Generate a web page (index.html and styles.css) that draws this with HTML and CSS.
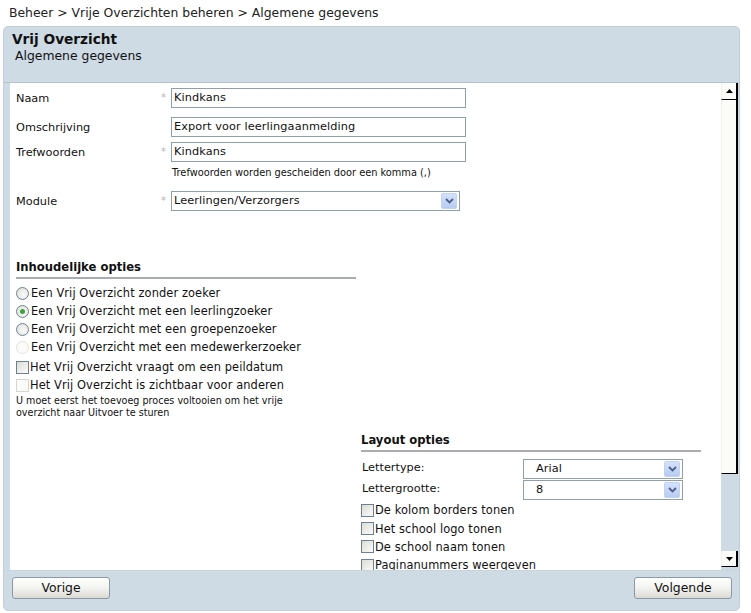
FILE: index.html
```html
<!DOCTYPE html>
<html>
<head>
<meta charset="utf-8">
<link rel="stylesheet" href="styles.css">
</head>
<body>
<div class="crumb">Beheer &gt; Vrije Overzichten beheren &gt; Algemene gegevens</div>
<div class="panel">
  <div class="panel-head">
    <div class="title">Vrij Overzicht</div>
    <div class="subtitle">Algemene gegevens</div>
  </div>
  <div class="content">
    <div class="scroll-body">
      <div class="row r-naam">
        <div class="label">Naam</div><div class="star">*</div>
        <div class="input">Kindkans</div>
      </div>
      <div class="row r-omschr">
        <div class="label">Omschrijving</div><div class="star"></div>
        <div class="input">Export voor leerlingaanmelding</div>
      </div>
      <div class="row r-tref">
        <div class="label">Trefwoorden</div><div class="star">*</div>
        <div class="input">Kindkans</div>
      </div>
      <div class="hint">Trefwoorden worden gescheiden door een komma (,)</div>
      <div class="row r-module">
        <div class="label">Module</div><div class="star">*</div>
        <div class="select wide"><span class="val">Leerlingen/Verzorgers</span><span class="arrow"><svg width="9" height="6" viewBox="0 0 9 6"><path d="M1 1 L4.5 4.5 L8 1" fill="none" stroke="#4b5f8a" stroke-width="1.8"/></svg></span></div>
      </div>

      <div class="section left-sec">
        <div class="sec-title">Inhoudelijke opties</div>
        <div class="opt"><span class="radio"></span>Een Vrij Overzicht zonder zoeker</div>
        <div class="opt"><span class="radio checked"></span>Een Vrij Overzicht met een leerlingzoeker</div>
        <div class="opt"><span class="radio"></span>Een Vrij Overzicht met een groepenzoeker</div>
        <div class="opt"><span class="radio disabled"></span>Een Vrij Overzicht met een medewerkerzoeker</div>
        <div class="opt cb first-cb"><span class="check"></span>Het Vrij Overzicht vraagt om een peildatum</div>
        <div class="opt cb"><span class="check disabled"></span>Het Vrij Overzicht is zichtbaar voor anderen</div>
        <div class="note">U moet eerst het toevoeg proces voltooien om het vrije<br>overzicht naar Uitvoer te sturen</div>
      </div>

      <div class="section right-sec">
        <div class="sec-title">Layout opties</div>
        <div class="lrow first-lrow">
          <div class="llabel">Lettertype:</div>
          <div class="select small"><span class="val">Arial</span><span class="arrow"><svg width="9" height="6" viewBox="0 0 9 6"><path d="M1 1 L4.5 4.5 L8 1" fill="none" stroke="#4b5f8a" stroke-width="1.8"/></svg></span></div>
        </div>
        <div class="lrow">
          <div class="llabel">Lettergrootte:</div>
          <div class="select small"><span class="val">8</span><span class="arrow"><svg width="9" height="6" viewBox="0 0 9 6"><path d="M1 1 L4.5 4.5 L8 1" fill="none" stroke="#4b5f8a" stroke-width="1.8"/></svg></span></div>
        </div>
        <div class="opt lcb"><span class="check"></span>De kolom borders tonen</div>
        <div class="opt lcb"><span class="check"></span>Het school logo tonen</div>
        <div class="opt lcb"><span class="check"></span>De school naam tonen</div>
        <div class="opt lcb"><span class="check"></span>Paginanummers weergeven</div>
      </div>
    </div>
    <div class="scrollbar">
      <div class="sb-btn up"><svg width="7" height="4" viewBox="0 0 7 4"><path d="M0 4 L3.5 0 L7 4 Z" fill="#000"/></svg></div>
      <div class="sb-thumb"></div>
      <div class="sb-track"></div>
      <div class="sb-btn down"><svg width="7" height="4" viewBox="0 0 7 4"><path d="M0 0 L3.5 4 L7 0 Z" fill="#000"/></svg></div>
      <div class="sb-tail"></div>
    </div>
  </div>
  <div class="footer">
    <div class="btn">Vorige</div>
    <div class="btn">Volgende</div>
  </div>
</div>
</body>
</html>
```
FILE: styles.css
```css
* { box-sizing: border-box; }
body {
  margin: 0;
  background: #ffffff;
  font-family: "DejaVu Sans", Verdana, sans-serif;
  font-size: 11.3px;
  color: #111;
}
.crumb {
  height: 26px;
  padding: 5px 0 0 9px;
  font-size: 12.4px;
  line-height: 16px;
  color: #222;
}
.panel {
  width: 737px;
  height: 585px;
  margin-left: 3px;
  background: #cedae4;
  border: 1px solid #c2cfd9;
  border-radius: 5px;
  display: flex;
  flex-direction: column;
}
.panel-head {
  height: 56px;
  padding: 4px 0 0 8px;
  border-bottom: 1px solid #b6c4cf;
}
.title {
  font-weight: bold;
  font-size: 13.7px;
  line-height: 17px;
  color: #111;
}
.subtitle {
  font-size: 12.4px;
  line-height: 15px;
  padding-left: 3px;
  color: #111;
}
.content {
  height: 487px;
  margin-left: 6px;
  display: flex;
}
.scroll-body {
  width: 711px;
  height: 487px;
  overflow: hidden;
  background: #fff;
  padding: 5px 0 0 6px;
}
.row {
  display: flex;
  height: 20px;
  align-items: flex-start;
}
.r-omschr { margin-top: 9px; }
.r-tref { margin-top: 5px; }
.r-module { margin-top: 12px; }
.label {
  width: 145px;
  line-height: 14px;
  padding-top: 4px;
  color: #111;
}
.star {
  width: 10px;
  color: #b8b8b8;
  font-size: 10px;
  line-height: 20px;
}
.input {
  width: 295px;
  height: 20px;
  border: 1px solid #8f9fad;
  padding-left: 2px;
  line-height: 18px;
  color: #111;
  letter-spacing: 0.1px;
}
.hint {
  margin: 5px 0 0 156px;
  font-size: 9.8px;
  line-height: 12px;
  color: #111;
}
.select {
  position: relative;
  height: 20px;
  border: 1px solid #8f9fad;
  background: #fff;
  line-height: 18px;
  padding-left: 2px;
  display: flex;
}
.select.wide { width: 289px; }
.select.small { width: 160px; padding-left: 12px; }
.select .val { flex: 1; letter-spacing: 0.1px; }
.select .arrow {
  width: 16px;
  height: 16px;
  margin: 1px 2px 0 0;
  background: linear-gradient(#d5e2fb, #b7cbf2);
  border: 1px solid #c2d2f2;
  border-radius: 2px;
  display: flex;
  align-items: center;
  justify-content: center;
}
.section { width: 340px; }
.left-sec { margin-top: 49px; }
.right-sec { margin: 14px 0 0 345px; }
.sec-title {
  font-weight: bold;
  font-size: 11.6px;
  line-height: 14px;
  padding-bottom: 3px;
  border-bottom: 2px solid #a9adb1;
  color: #111;
}
.left-sec .sec-title { margin-bottom: 5px; }
.opt {
  height: 18px;
  display: flex;
  align-items: center;
  font-size: 11.4px;
  letter-spacing: 0.1px;
  white-space: nowrap;
  color: #111;
}
.first-cb { margin-top: 2px; }
.radio {
  width: 13px;
  height: 13px;
  border-radius: 50%;
  border: 1px solid #6e8193;
  background: radial-gradient(circle at 60% 60%, #fafafa, #dcdcd6);
  margin-right: 2px;
  display: flex;
  align-items: center;
  justify-content: center;
}
.radio.checked::after {
  content: "";
  width: 5px;
  height: 5px;
  border-radius: 50%;
  background: #3ea43b;
}
.radio.disabled {
  border-color: #e2e2dc;
  background: #fbfbfa;
}
.check {
  width: 13px;
  height: 13px;
  border: 1px solid #6e7f90;
  background: linear-gradient(135deg, #dcdcd6, #fbfbfa);
  margin-right: 1px;
}
.check.disabled {
  border-color: #d6d6d0;
  background: #fbfbfa;
}
.note {
  margin-top: 1px;
  font-size: 9.6px;
  line-height: 12px;
  color: #111;
}
.lrow {
  display: flex;
  height: 21px;
  align-items: flex-start;
}
.first-lrow { margin-top: 7px; }
.llabel {
  width: 162px;
  padding: 1px 0 0 1px;
  line-height: 16px;
}
.lcb { height: 18.4px; }
.scrollbar {
  width: 17px;
  height: 487px;
  display: flex;
  flex-direction: column;
  background: #cedae4;
}
.sb-btn {
  height: 16px;
  flex: none;
  background: #fbfbf8;
  border-left: 1px solid #f0f0ec;
  border-right: 2px solid #000;
  border-bottom: 1px solid #000;
  display: flex;
  align-items: center;
  justify-content: center;
}
.sb-btn.up { height: 17px; }
.sb-thumb {
  height: 374px;
  flex: none;
  background: #fbfbf8;
  border-left: 1px solid #f0f0ec;
  border-right: 2px solid #000;
  border-bottom: 1px solid #000;
}
.sb-track { flex: 1; background: #cedae4; }
.sb-tail { height: 3px; flex: none; }
.footer {
  flex: 1;
  display: flex;
  justify-content: space-between;
  padding: 6px 7px 0 8px;
  border-top: 1px solid #c8d5df;
}
.btn {
  width: 98px;
  height: 22px;
  border: 1px solid #8c9aa6;
  border-radius: 3px;
  background: linear-gradient(#ffffff, #f3f3f0 50%, #dcdad4);
  text-align: center;
  font-size: 12.4px;
  line-height: 20px;
  color: #111;
}
```
